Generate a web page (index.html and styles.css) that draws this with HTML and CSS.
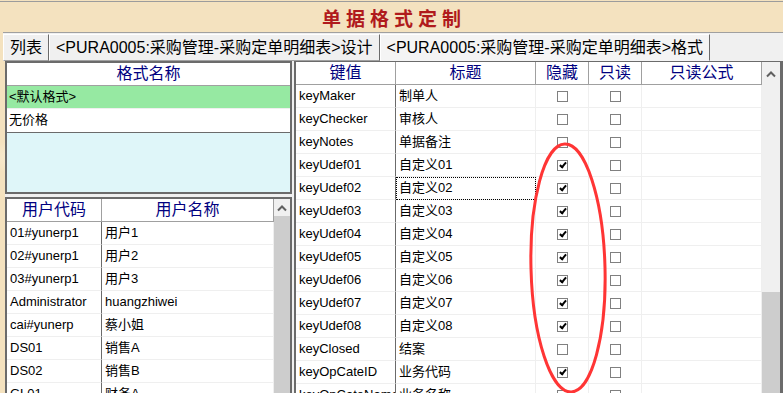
FILE: index.html
```html
<!DOCTYPE html>
<html lang="zh-CN">
<head>
    <meta charset="UTF-8">
    <title>单据格式定制</title>
    <link rel="stylesheet" href="styles.css">
</head>
<body>
    <div class="title">单据格式定制</div>

    <div class="tabs">
        <div class="tab">列表</div>
        <div class="tab">&lt;PURA0005:采购管理-采购定单明细表&gt;设计</div>
        <div class="tab active">&lt;PURA0005:采购管理-采购定单明细表&gt;格式</div>
    </div>

    <div class="main">
        <div class="left">
            <div class="box fmt">
                <div class="hd">格式名称</div>
                <div class="row sel">&lt;默认格式&gt;</div>
                <div class="row last">无价格</div>
                <div class="empty"></div>
            </div>

            <div class="box users">
                <div class="ugrid">
                    <div class="c h key">用户代码</div><div class="c h">用户名称</div>
                    <div class="c key">01#yunerp1</div><div class="c">用户1</div>
                    <div class="c key">02#yunerp1</div><div class="c">用户2</div>
                    <div class="c key">03#yunerp1</div><div class="c">用户3</div>
                    <div class="c key">Administrator</div><div class="c">huangzhiwei</div>
                    <div class="c key">cai#yunerp</div><div class="c">蔡小姐</div>
                    <div class="c key">DS01</div><div class="c">销售A</div>
                    <div class="c key">DS02</div><div class="c">销售B</div>
                    <div class="c key">GL01</div><div class="c">财务A</div>
                </div>
                <div class="vscroll small">
                    <div class="up"><svg width="12" height="8" viewBox="0 0 12 8"><path d="M2 6.5L6 2.5L10 6.5" fill="none" stroke="#606060" stroke-width="2"/></svg></div>
                    <div class="thumb"></div>
                </div>
            </div>
        </div>

        <div class="box right">
            <div class="grid">
                <div class="c h key">键值</div><div class="c h">标题</div><div class="c h">隐藏</div><div class="c h">只读</div><div class="c h">只读公式</div>

                <div class="c key">keyMaker</div><div class="c">制单人</div><div class="c ck"><span class="cb"></span></div><div class="c ck"><span class="cb"></span></div><div class="c"></div>
                <div class="c key">keyChecker</div><div class="c">审核人</div><div class="c ck"><span class="cb"></span></div><div class="c ck"><span class="cb"></span></div><div class="c"></div>
                <div class="c key">keyNotes</div><div class="c">单据备注</div><div class="c ck"><span class="cb"></span></div><div class="c ck"><span class="cb"></span></div><div class="c"></div>
                <div class="c key">keyUdef01</div><div class="c">自定义01</div><div class="c ck"><span class="cb on"></span></div><div class="c ck"><span class="cb"></span></div><div class="c"></div>
                <div class="c key">keyUdef02</div><div class="c focus">自定义02</div><div class="c ck"><span class="cb on"></span></div><div class="c ck"><span class="cb"></span></div><div class="c"></div>
                <div class="c key">keyUdef03</div><div class="c">自定义03</div><div class="c ck"><span class="cb on"></span></div><div class="c ck"><span class="cb"></span></div><div class="c"></div>
                <div class="c key">keyUdef04</div><div class="c">自定义04</div><div class="c ck"><span class="cb on"></span></div><div class="c ck"><span class="cb"></span></div><div class="c"></div>
                <div class="c key">keyUdef05</div><div class="c">自定义05</div><div class="c ck"><span class="cb on"></span></div><div class="c ck"><span class="cb"></span></div><div class="c"></div>
                <div class="c key">keyUdef06</div><div class="c">自定义06</div><div class="c ck"><span class="cb on"></span></div><div class="c ck"><span class="cb"></span></div><div class="c"></div>
                <div class="c key">keyUdef07</div><div class="c">自定义07</div><div class="c ck"><span class="cb on"></span></div><div class="c ck"><span class="cb"></span></div><div class="c"></div>
                <div class="c key">keyUdef08</div><div class="c">自定义08</div><div class="c ck"><span class="cb on"></span></div><div class="c ck"><span class="cb"></span></div><div class="c"></div>
                <div class="c key">keyClosed</div><div class="c">结案</div><div class="c ck"><span class="cb"></span></div><div class="c ck"><span class="cb"></span></div><div class="c"></div>
                <div class="c key">keyOpCateID</div><div class="c">业务代码</div><div class="c ck"><span class="cb on"></span></div><div class="c ck"><span class="cb"></span></div><div class="c"></div>
                <div class="c key">keyOpCateName</div><div class="c">业务名称</div><div class="c ck"><span class="cb"></span></div><div class="c ck"><span class="cb"></span></div><div class="c"></div>
            </div>
            <div class="vscroll">
                <div class="up"><svg width="12" height="8" viewBox="0 0 12 8"><path d="M2 6.5L6 2.5L10 6.5" fill="none" stroke="#606060" stroke-width="2"/></svg></div>
                <div class="track"></div>
                <div class="thumb"></div>
            </div>
        </div>
    </div>

    <!-- red hand-drawn mark over the hidden column -->
    <svg class="mark" width="783" height="393" viewBox="0 0 783 393">
        <ellipse cx="568" cy="268" rx="37" ry="124" transform="rotate(-1.5 568 268)" fill="none" stroke="#ff3535" stroke-width="3"/>
    </svg>
</body>
</html>
```

FILE: styles.css
```css
body {
    margin: 0;
    width: 783px;
    height: 393px;
    overflow: hidden;
    position: relative;
    font-family: "Liberation Sans", "Noto Sans CJK SC", sans-serif;
    font-size: 13px;
    color: #000;
    background:
        radial-gradient(ellipse 90px 20px at 8% 40%, rgba(255, 248, 230, .8), transparent),
        radial-gradient(ellipse 120px 18px at 30% 60%, rgba(232, 205, 160, .6), transparent),
        radial-gradient(ellipse 100px 22px at 55% 30%, rgba(255, 246, 226, .7), transparent),
        radial-gradient(ellipse 140px 20px at 78% 55%, rgba(235, 208, 165, .6), transparent),
        radial-gradient(ellipse 90px 20px at 95% 35%, rgba(255, 247, 228, .7), transparent),
        #f4e2bf;
}
.title {
    margin-top: 1px;
    height: 30px;
    border-top: 1px solid #9c9c9c;
    text-align: center;
    font-family: "Noto Sans CJK SC", sans-serif;
    font-weight: bold;
    font-size: 19px;
    line-height: 32px;
    letter-spacing: 5px;
    padding-left: 5px;
    color: #b01a1c;
}
.tabs {
    display: flex;
    height: 27px;
    margin-left: 3px;
    padding-top: 1px;
    box-sizing: border-box;
    border-top: 1px solid #a0a0a0;
    background: #f0f0f0;
}
.tab {
    height: 25px;
    line-height: 25px;
    padding: 0 6px;
    font-size: 16px;
    white-space: nowrap;
    border: 1px solid;
    border-color: #fff #6b6b6b #a0a0a0 #fff;
    background: #f0f0f0;
}
.tab.active {
    background: #f4f4f4;
    border-color: #fff #6b6b6b #f4f4f4 #fff;
}
.main {
    display: flex;
    gap: 2px;
    margin-left: 5px;
    height: 335px;
    padding-top: 2px;
    box-sizing: border-box;
    background: #f0f0f0;
}
.left {
    width: 287px;
    display: flex;
    flex-direction: column;
    gap: 3px;
}
.box {
    border: 2px solid #6b6b6b;
    background: #fff;
    box-sizing: border-box;
    overflow: hidden;
}
.fmt {
    height: 133px;
    flex: none;
    display: flex;
    flex-direction: column;
}
.fmt .hd {
    height: 23px;
    line-height: 22px;
    box-sizing: border-box;
    border-bottom: 1px solid #a0a0a0;
    text-align: center;
    color: #000080;
    font-size: 16px;
}
.fmt .row {
    height: 23px;
    line-height: 22px;
    box-sizing: border-box;
    padding-left: 2px;
    border-bottom: 1px solid #efefef;
}
.fmt .row.last {
    border-bottom: none;
}
.fmt .sel {
    background: #96e9a2;
}
.fmt .empty {
    flex: 1;
    background: #dff6f9;
    border-top: 1px solid #6b6b6b;
}
.users {
    flex: 1;
    display: flex;
    border-bottom: none;
}
.ugrid {
    width: 267px;
    display: grid;
    grid-template-columns: 95px 1fr;
    grid-auto-rows: 23px;
    align-content: start;
}
.grid {
    width: 466px;
    display: grid;
    grid-template-columns: 100px 140px 53px 53px 120px;
    grid-auto-rows: 23px;
    align-content: start;
}
.c {
    box-sizing: border-box;
    border-right: 1px solid #efefef;
    border-bottom: 1px solid #efefef;
    padding-left: 3px;
    line-height: 22px;
    white-space: nowrap;
    overflow: hidden;
}
.c.key {
    border-right-color: #6b6b6b;
}
.c.h {
    padding-left: 0;
    text-align: center;
    color: #000080;
    font-size: 16px;
    border-right-color: #a0a0a0;
    border-bottom-color: #a0a0a0;
}
.c.focus {
    outline: 1px dotted #000;
    outline-offset: -1px;
}
.c.ck {
    display: flex;
    align-items: center;
    justify-content: center;
    padding-left: 0;
}
.cb {
    width: 11px;
    height: 11px;
    box-sizing: border-box;
    border: 1px solid #808080;
    background: #fff;
    position: relative;
}
.cb.on::after {
    content: "";
    position: absolute;
    left: 3px;
    top: 0;
    width: 2px;
    height: 5px;
    border: solid #000;
    border-width: 0 2px 2px 0;
    transform: rotate(40deg);
}
.right {
    flex: 1;
    display: flex;
    border-width: 1px 3px 0 2px;
}
.vscroll {
    width: 18px;
    display: flex;
    flex-direction: column;
    background: #cdcdcd;
}
.vscroll.small {
    width: 16px;
}
.vscroll .up {
    height: 23px;
    flex: none;
    display: flex;
    align-items: center;
    justify-content: center;
    background: #f0f0f0;
}
.vscroll.small .up {
    height: 17px;
}
.vscroll .track {
    height: 207px;
    background: #f0f0f0;
}
.vscroll .thumb {
    flex: 1;
    background: #cdcdcd;
}
.mark {
    position: absolute;
    left: 0;
    top: 0;
    pointer-events: none;
}
```
